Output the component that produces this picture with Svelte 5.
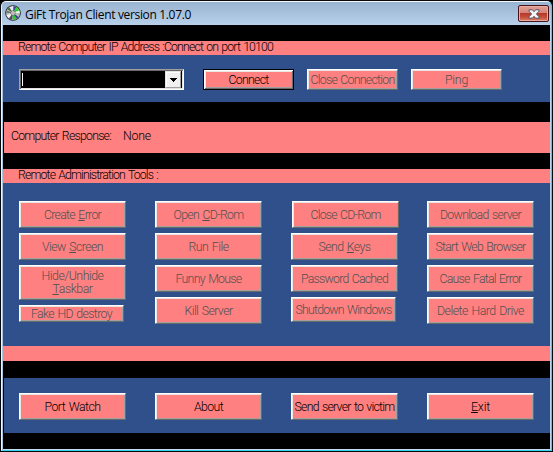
<script>
  const columns = [
    [
      { lines: [['Create ', 'E', 'rror', 57]] },
      { lines: [['View ', 'S', 'creen', 61]] },
      { lines: [['Hide/Unhide', '', '', 62], ['', 'T', 'askbar', 40]], kind: 'tall' },
      { lines: [['Fake HD destroy', '', '', 81]], kind: 'low' }
    ],
    [
      { lines: [['Open ', 'C', 'D-Rom', 70]] },
      { lines: [['Run File', '', '', 40]] },
      { lines: [['Funny Mouse', '', '', 66]] },
      { lines: [['Kill Server', '', '', 48]] }
    ],
    [
      { lines: [['Close CD-Rom', '', '', 70]], kind: 'shifted' },
      { lines: [['Send ', 'K', 'eys', 52]] },
      { lines: [['Password Cached', '', '', 87]] },
      { lines: [['Shutdown Windows', '', '', 96]], kind: 'short' }
    ],
    [
      { lines: [['Download server', '', '', 81]] },
      { lines: [['Start Web Browser', '', '', 90]] },
      { lines: [['Cause Fatal Error', '', '', 82]] },
      { lines: [['Delete Hard Drive', '', '', 87]] }
    ]
  ];

  const footer = [
    ['Port Watch', '', '', 56],
    ['About', '', '', 29],
    ['Send server to victim', '', '', 100],
    ['', 'E', 'xit', 19]
  ];

  // Spreads a label's letters so that it takes up the given width.
  function fit(node, width) {
    const natural = node.getBoundingClientRect().width;
    const spacing = (width - natural) / node.textContent.length;
    node.style.letterSpacing = `${spacing.toFixed(3)}px`;
  }
</script>

{#snippet label([before, key, after, width])}
  <span class="label" use:fit={width}>{before}{#if key}<u>{key}</u>{/if}{after}</span>
{/snippet}

<div class="window">
  <header>
    <svg class="disc" width="16" height="16" viewBox="0 0 16 16">
      <circle cx="8" cy="8" r="7.8" fill="#1c1c22" />
      <circle cx="8" cy="8" r="7" fill="#b9bdb9" />
      <path d="M8 8 4 2.4 8 1.2Z" fill="#e8e8e8" />
      <path d="M8 8 2.4 4.2 4.3 2.3Z" fill="#456b45" />
      <path d="M8 8 8.6 1.2 11.4 2Z" fill="#3b41a8" />
      <path d="M8 8 11.4 2 14.3 5.4Z" fill="#25d625" />
      <path d="M8 8 14.3 5.4 14.8 8Z" fill="#eef4ee" />
      <path d="M8 8 1.5 10.3 3.7 13.2Z" fill="#f2f2f2" />
      <path d="M8 8 4 13.4 7 14.8Z" fill="#5c3d76" />
      <path d="M8 8 7.5 14.8 11.8 13.5Z" fill="#22cf22" />
      <path d="M8 8 11.8 13.5 13.5 12Z" fill="#3338a0" />
      <path d="M8 8 1.2 8 1.8 5.6Z" fill="#747474" />
      <circle cx="8" cy="8" r="2.2" fill="#eee" stroke="#555" stroke-width=".7" />
      <circle cx="8" cy="8" r=".8" fill="#777" />
    </svg>
    <span class="title" use:fit={166}>GiFt Trojan Client version 1.07.0</span>
    <button class="close" aria-label="Close">
      <svg width="12" height="10" viewBox="0 0 12 10">
        <path d="M1 .8h3.3L6 2.7 7.7.8H11v1.4L8.4 5 11 7.8v1.4H7.7L6 7.3 4.3 9.2H1V7.8L3.6 5 1 2.2Z" fill="#f5f5f5" stroke="#54566a" stroke-width="1" />
      </svg>
    </button>
  </header>

  <main>
    <div class="strip first">{@render label(['Remote Computer IP Address :Connect on port 10100', '', '', 255])}</div>
    <section class="connection">
      <div class="combo">
        <i class="caret"></i>
        <span class="arrow">
          <svg width="7" height="4" viewBox="0 0 7 4" shape-rendering="crispEdges"><path d="M0 0h7v1H6v1H5v1H4v1H3V3H2V2H1V1H0Z" /></svg>
        </span>
      </div>
      <button class="default">{@render label(['Connect', '', '', 40])}</button>
      <button disabled>{@render label(['Close Connection', '', '', 84])}</button>
      <button disabled>{@render label(['Ping', '', '', 23])}</button>
    </section>
    <div class="response">
      {@render label(['Computer Response:', '', '', 100])}
      {@render label(['None', '', '', 28])}
    </div>
    <div class="strip">{@render label(['Remote Administration Tools :', '', '', 140])}</div>
    <section class="tools">
      {#each columns as column}
        <div class="column">
          {#each column as tool}
            <button disabled class={tool.kind}>
              {#each tool.lines as line}{@render label(line)}{/each}
            </button>
          {/each}
        </div>
      {/each}
    </section>
    <div class="status"></div>
    <footer>
      {#each footer as item}
        <button>{@render label(item)}</button>
      {/each}
    </footer>
  </main>
</div>

<style>
  :global(body) { margin: 0; background: #000; }
  .window {
    box-sizing: border-box;
    width: 553px;
    height: 452px;
    display: flex;
    flex-direction: column;
    background: #000;
    border: 1px solid #08090c;
    border-radius: 5px 5px 0 0;
    overflow: hidden;
    font: 300 12.3px/13px Roboto, "Liberation Sans", sans-serif;
    word-spacing: 1px;
    color: #000;
  }
  header {
    box-sizing: border-box;
    flex: none;
    height: 24px;
    display: flex;
    align-items: center;
    padding: 1px 3px 0 4px;
    background: linear-gradient(#99b4d1, #b8d0ea);
    border-top: 1px solid #f6faff;
    border-left: 1px solid #f0f6fc;
    border-right: 1px solid #35d3ef;
    border-radius: 5px 5px 0 0;
  }
  .disc { margin: -2px 0 0 -1px; }
  .title {
    margin-left: 4px;
    margin-top: 1px;
    font: 12px/16px "Open Sans", "Noto Sans", sans-serif;
    word-spacing: 0;
    white-space: nowrap;
  }
  .close {
    width: 31px;
    height: 17px;
    margin: -1px -1px 0 auto;
    border: 1px solid #4b141b;
    border-radius: 2px;
    box-shadow: inset 0 0 0 1px #e5aaa2;
    background: linear-gradient(#e0a096, #d58478 45%, #b8382a 50%, #c4503c 75%, #d98168);
  }
  main {
    display: flex;
    flex-direction: column;
    height: 424px;
    border-left: 1px solid #eef6fd;
    border-right: 1px solid #35d3ef;
    border-bottom: 1px solid #35d3ef;
    box-shadow: inset 1px 0 #a9c5e2, inset -1px 0 #b9d3ec, inset 0 -1px #c5dcf0;
    padding: 16px 1px 17px;
  }
  .label { display: block; white-space: pre; width: max-content; }
  u { text-decoration-thickness: 1px; text-underline-offset: 1px; }
  .strip {
    height: 14px;
    margin-top: 16px;
    padding-left: 15px;
    background: #ff8080;
  }
  .strip.first { margin-top: 0; }
  section, footer { background: #30508c; display: flex; }
  .connection {
    box-sizing: border-box;
    height: 47px;
    padding: 14px 16px 12px;
  }
  button {
    box-sizing: border-box;
    flex: none;
    width: 107px;
    height: 27px;
    padding: 1px 0 0;
    display: flex;
    flex-direction: column;
    align-items: center;
    justify-content: center;
    border: 1px solid;
    border-color: #fff #6a6a6a #6a6a6a #fff;
    border-radius: 0;
    background: #ff8080;
    box-shadow: inset 1px 1px #e9e5e1, inset -1px -1px #a0a0a0;
    font: inherit;
    word-spacing: inherit;
    color: #000;
  }
  button:disabled { color: #505050; }
  .connection button { width: 91px; height: 21px; margin-right: 13px; }
  .connection .default {
    border-color: #000;
    box-shadow: inset 1px 1px #fff, inset -1px -1px #6a6a6a, inset 2px 2px #e9e5e1, inset -2px -2px #a0a0a0;
  }
  .combo {
    box-sizing: border-box;
    width: 165px;
    height: 21px;
    margin-right: 19px;
    display: flex;
    align-items: center;
    background: #000;
    border: 1px solid;
    border-color: #a0a0a0 #fff #fff #a0a0a0;
    box-shadow: inset 1px 1px #696969, inset -1px -1px #e3e3e3;
  }
  .caret { width: 1px; height: 13px; margin-left: 2px; background: #fff; }
  .arrow {
    box-sizing: border-box;
    width: 16px;
    height: 17px;
    margin: 0 2px 0 auto;
    display: flex;
    align-items: center;
    justify-content: center;
    background: #f0f0f0;
    border: 1px solid;
    border-color: #e3e3e3 #a0a0a0 #a0a0a0 #e3e3e3;
    box-shadow: inset 1px 1px #fff;
  }
  .response {
    box-sizing: border-box;
    height: 31px;
    margin: 20px 0 0 1px;
    padding: 8px 7px;
    display: flex;
    gap: 12px;
    background: #ff8080;
  }
  .tools {
    box-sizing: border-box;
    height: 163px;
    padding: 18px 16px 0;
    gap: 29px;
  }
  .column { width: 107px; display: flex; flex-direction: column; gap: 5px; }
  button.tall { height: 35px; }
  button.low { width: 105px; height: 17px; }
  button.short { width: 105px; height: 25px; }
  button.shifted { margin-left: 1px; }
  .status { height: 15px; background: #ff8080; }
  footer {
    box-sizing: border-box;
    height: 55px;
    margin: 17px 0 0 1px;
    padding: 15px 15px 0;
    gap: 29px;
  }
</style>
